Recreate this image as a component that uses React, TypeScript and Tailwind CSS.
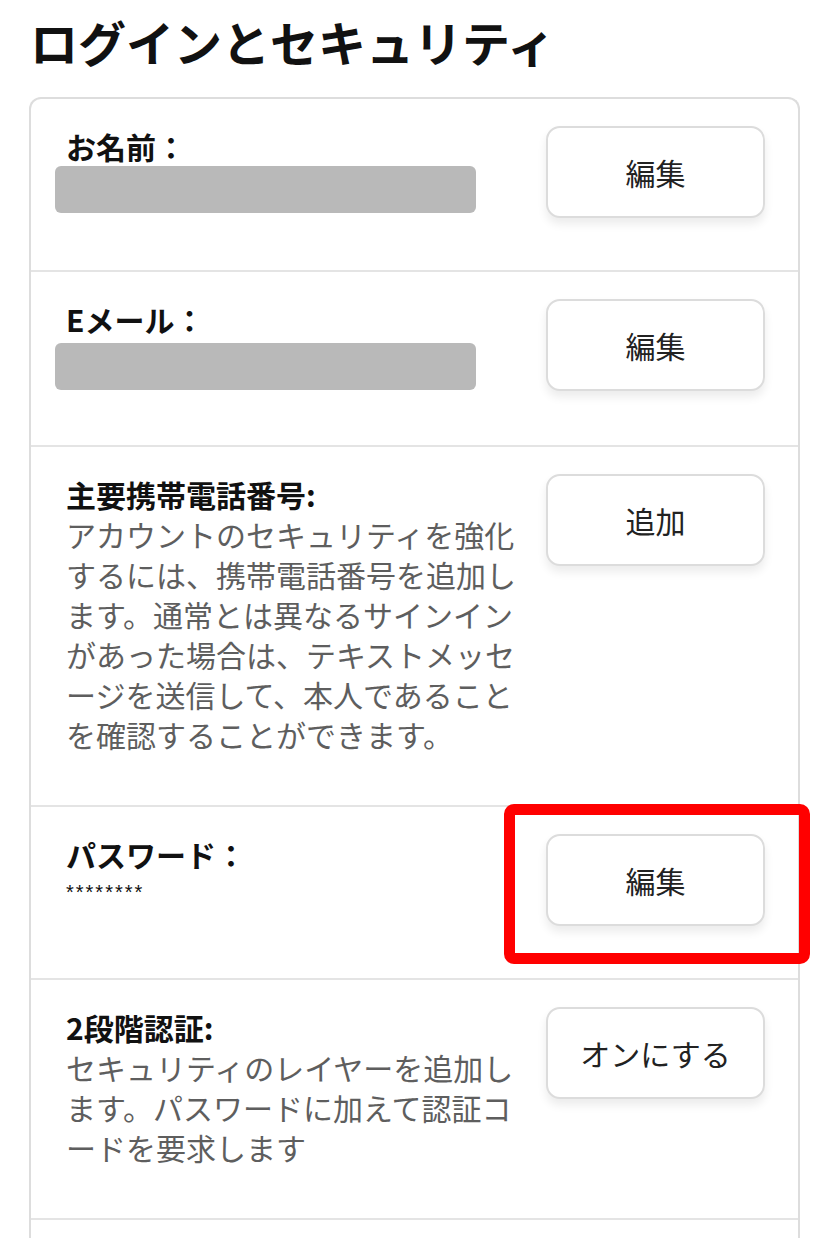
import type { ReactNode } from 'react'

const FONT = '"Noto Sans CJK JP", "Noto Sans", sans-serif'

function ActionButton({ label }: { label: string }) {
  return (
    <button className="w-[219px] h-[92px] shrink-0 rounded-[14px] border-2 border-[#dcdcdc] bg-white text-[30px] text-[#222] shadow-[0_6px_10px_rgba(0,0,0,0.08)]">
      {label}
    </button>
  )
}

function Row({
  label,
  action,
  children,
  highlight,
  pb,
}: {
  label: string
  action: string
  children?: ReactNode
  highlight?: boolean
  pb: string
}) {
  return (
    <div className={`flex justify-between pl-[35px] pr-[33px] pt-[27px] border-b-2 border-[#e4e4e4] ${pb}`}>
      <div className="w-[452px]">
        <div className="text-[30px] leading-[40px] font-bold text-[#111]">{label}</div>
        {children}
      </div>
      <div className="relative">
        <ActionButton label={action} />
        {highlight && (
          <div className="absolute left-[-42px] top-[-30px] w-[306px] h-[160px] rounded-[10px] border-[11px] border-[#ff0000]" />
        )}
      </div>
    </div>
  )
}

function Lines({ lines }: { lines: string[] }) {
  return (
    <div className="text-[30px] leading-[40px] text-[#5e5e5e]">
      {lines.map((l) => (
        <div key={l} className="whitespace-nowrap">
          {l}
        </div>
      ))}
    </div>
  )
}

function Redacted({ offset }: { offset?: boolean }) {
  return (
    <div
      className={`ml-[-11px] w-[421px] h-[47px] rounded-[6px] bg-[#b9b9b9] ${offset ? 'mt-[4px]' : 'mt-0'}`}
    />
  )
}

export default function App() {
  return (
    <div className="h-[1238px] overflow-hidden bg-white" style={{ fontFamily: FONT }}>
      <h1 className="pl-[30px] pt-[10px] text-[48px] leading-[62px] font-bold text-[#111]">
        ログインとセキュリティ
      </h1>

      <div className="mt-[25px] ml-[29px] w-[771px] rounded-t-[12px] border-2 border-b-0 border-[#dddddd]">
        <Row label="お名前：" action="編集" pb="pb-[52px]">
          <Redacted />
        </Row>
        <Row label="Eメール：" action="編集" pb="pb-[54px]">
          <Redacted offset />
        </Row>
        <Row label="主要携帯電話番号:" action="追加" pb="pb-[51px]">
          <Lines
            lines={[
              'アカウントのセキュリティを強化',
              'するには、携帯電話番号を追加し',
              'ます。通常とは異なるサインイン',
              'があった場合は、テキストメッセ',
              'ージを送信して、本人であること',
              'を確認することができます。',
            ]}
          />
        </Row>
        <Row label="パスワード：" action="編集" pb="pb-[52px]" highlight>
          <div
            className="mt-[6px] text-[20px] leading-[24px] tracking-[2px] text-[#111]"
            style={{ fontFamily: '"Liberation Sans", sans-serif' }}
          >
            ********
          </div>
        </Row>
        <Row label="2段階認証:" action="オンにする" pb="pb-[51px]">
          <Lines
            lines={[
              'セキュリティのレイヤーを追加し',
              'ます。パスワードに加えて認証コ',
              'ードを要求します',
            ]}
          />
        </Row>
        <div className="h-[200px]" />
      </div>
    </div>
  )
}
